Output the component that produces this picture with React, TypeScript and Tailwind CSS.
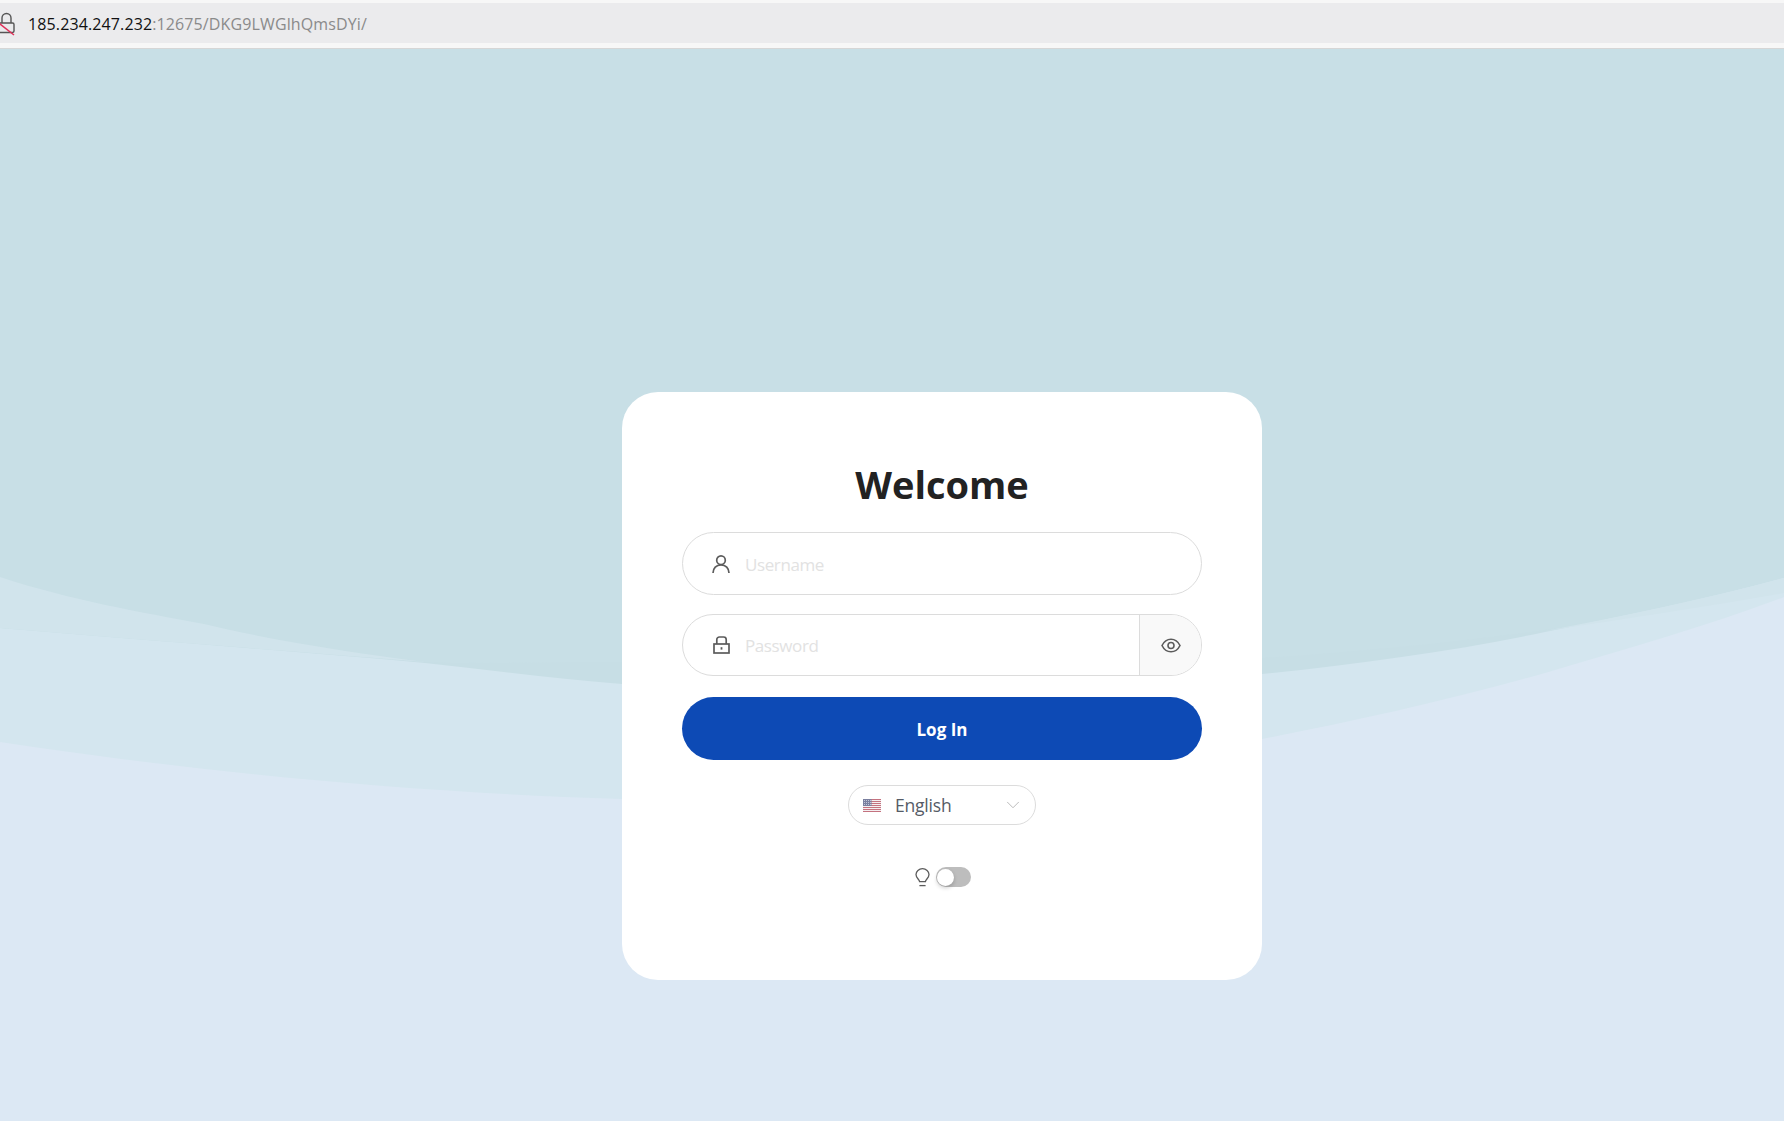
import React from "react";
import { ChevronDown } from "lucide-react";

// background waves, page coordinates
function Waves() {
  return (
    <svg className="absolute inset-0 h-full w-full" viewBox="0 0 1784 1121" preserveAspectRatio="none">
      <path
        d="M0 577C70 600 140 612 204 624C280 642 350 652 425 662C480 664 550 662 622 662L1262 658C1360 652 1460 642 1545 630C1630 618 1710 606 1784 593L1784 1121L0 1121Z"
        fill="#c7dee5"
      />
      <path
        d="M0 628C140 640 280 650 425 663C490 670 555 679 622 684C820 700 1060 696 1262 674C1360 664 1460 650 1545 632C1630 615 1710 598 1784 578L1784 1121L0 1121Z"
        fill="#d4e6ef"
      />
      <path
        d="M0 577C70 600 140 612 204 624C280 642 350 652 425 662C280 650 140 640 0 628Z"
        fill="#d1e4ec"
      />
      <path d="M1545 631C1630 615 1710 598 1784 578L1784 593C1710 606 1630 618 1545 631Z" fill="#d1e4ec" />
      <path
        d="M0 742C200 772 400 792 622 799C850 806 1060 780 1262 739C1350 722 1450 700 1545 673C1630 648 1710 625 1784 597L1784 1121L0 1121Z"
        fill="#dce8f4"
      />
    </svg>
  );
}

function BrowserBar() {
  return (
    <div className="relative z-10 h-[49px] border-b border-[#d6d6d6] bg-[#f7f7f7] pt-[3px]">
      <div className="flex h-[40px] items-center bg-[#ebebed] pt-[2px]">
        <svg className="ml-[-5px] h-[24px] w-[21px] shrink-0" viewBox="0 0 21 24" fill="none">
          <path d="M7 11V6a4.5 4.5 0 0 1 9 0v5" stroke="#555" strokeWidth="1.4" />
          <rect x="4" y="11" width="15" height="9.5" rx="1.4" stroke="#555" strokeWidth="1.4" />
          <path d="M0 8L19 23" stroke="#e0315a" strokeWidth="1.5" />
        </svg>
        <span className="ml-[12px] text-[16px] tracking-[0.12px] text-[#8a8a8a]">
          <span className="text-[#111111]">185.234.247.232</span>:12675/DKG9LWGlhQmsDYi/
        </span>
      </div>
    </div>
  );
}

function UserIcon() {
  return (
    <svg className="h-[18px] w-[18px]" viewBox="0 0 18 18" fill="none" stroke="#5c5c5c" strokeWidth="1.7">
      <circle cx="9" cy="5.2" r="4.3" />
      <path d="M1 18c0-4.8 3.3-8.2 8-8.2s8 3.4 8 8.2" />
    </svg>
  );
}

function LockIcon() {
  return (
    <svg className="h-[18px] w-[17px]" viewBox="0 0 17 18" fill="none" stroke="#5c5c5c" strokeWidth="1.7">
      <path d="M3.8 8V3.6A2.6 2.6 0 0 1 6.4 1h4.2a2.6 2.6 0 0 1 2.6 2.6V8" />
      <rect x="1" y="8" width="15" height="9" />
      <rect x="7.6" y="11.2" width="1.8" height="2.4" fill="#5c5c5c" stroke="none" />
    </svg>
  );
}

function EyeIcon() {
  return (
    <svg className="h-[15px] w-[20px]" viewBox="0 0 20 15" fill="none" stroke="#5c5c5c" strokeWidth="1.6">
      <path d="M1 7.5C3 3.4 6.2 1.2 10 1.2S17 3.4 19 7.5C17 11.6 13.8 13.8 10 13.8S3 11.6 1 7.5Z" />
      <circle cx="10" cy="7.5" r="3" />
    </svg>
  );
}

function BulbIcon() {
  return (
    <svg className="h-[19px] w-[15px]" viewBox="0 0 15 19" fill="none" stroke="#5c5c5c" strokeWidth="1.3">
      <path d="M4.6 13.6C4.4 11.4 1 10 1 6.5a6.5 5.8 0 0 1 13 0c0 3.5-3.4 4.9-3.6 7.1Z" />
      <path d="M4.4 17.6h6.2" />
    </svg>
  );
}

function UsFlag() {
  return (
    <svg className="h-[13px] w-[18px]" viewBox="0 0 18 13">
      <rect width="18" height="13" fill="#f4eef0" />
      <path d="M0 0.5H18M0 2.5H18M0 4.5H18M0 6.5H18M0 8.5H18M0 10.5H18M0 12.5H18" stroke="#c4727f" strokeWidth="1" />
      <rect width="8.5" height="7" fill="#7a7f9f" />
      <path d="M1 1.5H8M1 3.5H8M1 5.5H8" stroke="#d6d8e4" strokeWidth="0.8" strokeDasharray="1 1" />
    </svg>
  );
}

export default function App() {
  return (
    <div className="relative h-[1121px] w-full overflow-hidden bg-[#c8dfe6] font-['Open_Sans',sans-serif]">
      <Waves />
      <BrowserBar />

      <div className="relative pt-[343px] pl-[622px]">
        <div className="h-[588px] w-[640px] rounded-[36px] bg-white px-[60px] pt-[65px]">
          <h1 className="h-[75px] text-center text-[38px] leading-[54px] font-bold text-[#222222]">Welcome</h1>

          <div className="flex h-[63px] items-center rounded-full border border-[#dcdcdc] bg-white pl-[29px]">
            <UserIcon />
            <input
              placeholder="Username"
              className="mt-[2px] ml-[15px] min-w-0 flex-1 bg-transparent text-[17px] tracking-[-0.4px] outline-none placeholder:text-[#e2e2e2]"
            />
          </div>

          <div className="mt-[19px] flex h-[62px] items-center overflow-hidden rounded-full border border-[#dcdcdc] bg-white pl-[30px]">
            <LockIcon />
            <input
              placeholder="Password"
              className="mt-[2px] ml-[15px] min-w-0 flex-1 bg-transparent text-[17px] tracking-[-0.4px] outline-none placeholder:text-[#e2e2e2]"
            />
            <button className="flex h-full w-[62px] items-center justify-center border-l border-[#dcdcdc] bg-[#f9f9f9]">
              <EyeIcon />
            </button>
          </div>

          <button className="mt-[21px] h-[63px] w-full rounded-full bg-[#0d4ab5] pt-[2px] text-[17px] font-bold text-white">
            Log In
          </button>

          <div className="mt-[25px] flex justify-center">
            <div className="flex h-[40px] w-[188px] items-center rounded-full border border-[#dcdcdc] pr-[11px] pl-[14px]">
              <UsFlag />
              <span className="mt-[1px] ml-[14px] flex-1 text-[17.5px] tracking-[-0.2px] text-[#555b66]">English</span>
              <ChevronDown className="h-[22px] w-[22px] text-[#b5b5b5]" strokeWidth={1} />
            </div>
          </div>

          <div className="mt-[42px] ml-[235px] flex items-center">
            <div className="ml-[-2px]">
              <BulbIcon />
            </div>
            <div className="ml-[6px] flex h-[20px] w-[35px] items-center rounded-full bg-[#bdbdbd] pl-[1px]">
              <div className="h-[17px] w-[17px] rounded-full bg-white shadow-[0_2px_4px_rgba(0,0,0,0.2)]" />
            </div>
          </div>
        </div>
      </div>
    </div>
  );
}
